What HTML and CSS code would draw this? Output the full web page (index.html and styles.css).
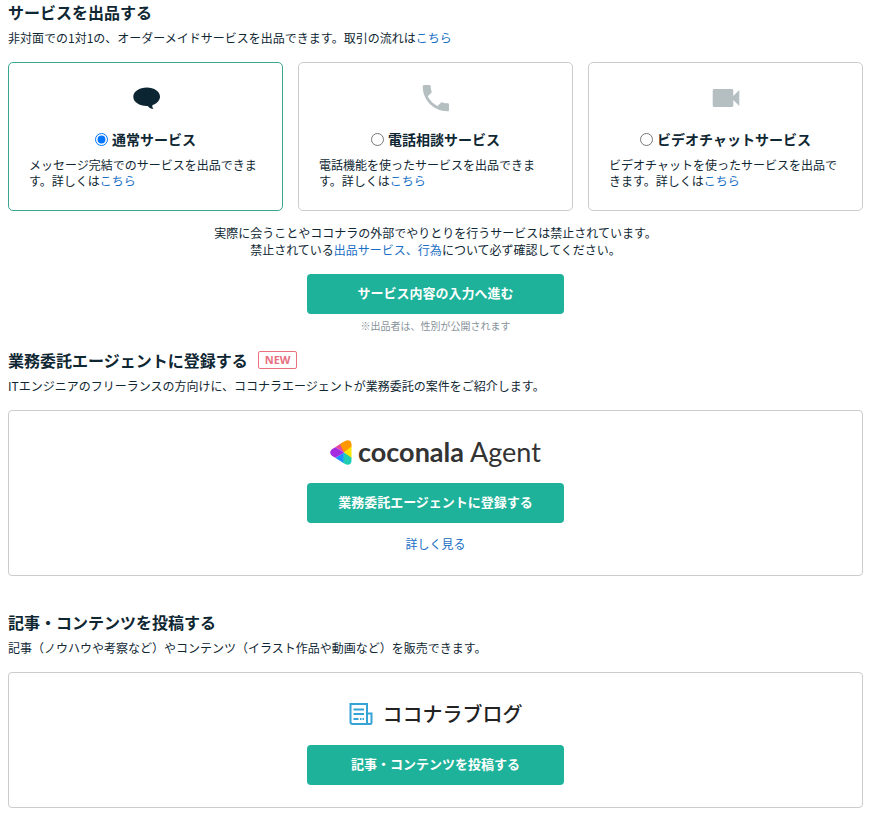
FILE: index.html
```
<!DOCTYPE html>
<html lang="ja">
<head>
  <meta charset="UTF-8">
  <meta name="viewport" content="width=device-width, initial-scale=1">
  <title>出品する</title>
  <link rel="stylesheet" href="styles.css">
</head>
<body>
  <section class="section">
    <h2 class="title">サービスを出品する</h2>
    <p class="lead">非対面での1対1の、オーダーメイドサービスを出品できます。取引の流れは<a href="#">こちら</a></p>
    <form action="#">
      <div class="cards">
        <div class="card active">
          <svg class="card-icon" viewBox="0 0 32 32">
            <path d="M16.800 5.500C9.400 5.500 3.300 9.500 3.300 14.700s6.100 9.300 13.500 9.300c.6 0 1 .1 1.400.5 1.200 1.400 2.800 2.400 5.300 2.600-1.200-1.300-1.400-2.800-1-4.100 4.400-1.500 7.500-4.700 7.500-8.300 0-5.200-5.800-9.200-13.200-9.200z" fill="#0b2532"/>
          </svg>
          <div class="card-title">
            <input type="radio" name="kind" id="kind-normal" checked>
            <label for="kind-normal">通常サービス</label>
          </div>
          <p class="card-text">メッセージ完結でのサービスを出品できます。詳しくは<a href="#">こちら</a></p>
        </div>
        <div class="card">
          <svg class="card-icon" viewBox="0 0 32 32">
            <path d="M7.700 14.200c2.100 4.200 5.600 7.700 9.900 9.900l3.300-3.300c.4-.4 1-.5 1.500-.4 1.700.6 3.500.9 5.300.9.800 0 1.300.6 1.300 1.400v5.200c0 .8-.6 1.400-1.400 1.400C13.600 29.300 2.700 18.300 2.700 4.300c0-.8.600-1.400 1.400-1.400h5.200c.8 0 1.400.6 1.400 1.400 0 1.800.3 3.600.9 5.300.2.500 0 1.100-.3 1.500z" fill="#b5bfc2"/>
          </svg>
          <div class="card-title">
            <input type="radio" name="kind" id="kind-phone">
            <label for="kind-phone">電話相談サービス</label>
          </div>
          <p class="card-text">電話機能を使ったサービスを出品できます。詳しくは<a href="#">こちら</a></p>
        </div>
        <div class="card">
          <svg class="card-icon" viewBox="0 0 32 32">
            <path d="M23.300 14V8.500c0-.8-.7-1.500-1.500-1.500H4.200c-.8 0-1.500.7-1.500 1.500v15c0 .8.700 1.500 1.500 1.500h17.600c.8 0 1.500-.7 1.500-1.500V18l6 6V8z" fill="#b5bfc2"/>
          </svg>
          <div class="card-title">
            <input type="radio" name="kind" id="kind-video">
            <label for="kind-video">ビデオチャットサービス</label>
          </div>
          <p class="card-text">ビデオチャットを使ったサービスを出品できます。詳しくは<a href="#">こちら</a></p>
        </div>
      </div>
      <p class="notice">実際に会うことやココナラの外部でやりとりを行うサービスは禁止されています。<br>禁止されている<a href="#">出品サービス、行為</a>について必ず確認してください。</p>
      <button type="submit" class="btn">サービス内容の入力へ進む</button>
      <p class="note">※出品者は、性別が公開されます</p>
    </form>
  </section>

  <section class="section agent">
    <h2 class="title">業務委託エージェントに登録する <span class="badge">NEW</span></h2>
    <p class="lead">ITエンジニアのフリーランスの方向けに、ココナラエージェントが業務委託の案件をご紹介します。</p>
    <div class="panel">
      <div class="logo">
        <svg class="agent-mark" viewBox="0 0 22 25">
          <defs>
            <clipPath id="mark">
              <path d="M15 1C18.500-1 21.500.9 21.500 4.200v16.600c0 3.300-3 5.200-6.500 3.200L2 15.800c-2.300-1.600-2.300-5 0-6.600z"/>
            </clipPath>
          </defs>
          <g clip-path="url(#mark)">
            <path d="M14 12.500L5 7V0h8z" fill="#e8489a"/>
            <path d="M14 12.500L10 4l3-4h9v7z" fill="#ff9800"/>
            <path d="M14 12.500L22 6v13z" fill="#ffe500"/>
            <path d="M14 12.500L22 18v7H12z" fill="#1fcdb4"/>
            <path d="M14 12.500L5 18v7h8z" fill="#1e90ff"/>
            <path d="M14 12.500L5 7 0 9v8l5 1z" fill="#a52be0"/>
          </g>
        </svg>
        <span class="agent-name"><b>coconala</b> Agent</span>
      </div>
      <button type="button" class="btn">業務委託エージェントに登録する</button>
      <a href="#" class="more">詳しく見る</a>
    </div>
  </section>

  <section class="section blog">
    <h2 class="title">記事・コンテンツを投稿する</h2>
    <p class="lead">記事（ノウハウや考察など）やコンテンツ（イラスト作品や動画など）を販売できます。</p>
    <div class="panel">
      <div class="logo">
        <svg class="blog-mark" viewBox="0 0 24 24" fill="none" stroke="#35a3d5" stroke-width="2">
          <path d="M18 22V2H1.500v18c0 1.200.8 2 2 2H21c1 0 1.500-.6 1.500-1.500V11.500H18"/>
          <path d="M4.500 7.500h10.500M4.500 12h10.500M4.500 17h5M11 17h1.500M13.500 17h1.500"/>
        </svg>
        <span class="blog-name">ココナラブログ</span>
      </div>
      <button type="button" class="btn">記事・コンテンツを投稿する</button>
    </div>
  </section>
</body>
</html>
```
FILE: styles.css
```
* {
  box-sizing: border-box;
}
body {
  margin: 0;
  padding: 0 9px 7px 8px;
  background: #fff;
  color: #0f2733;
  font-family: "Noto Sans CJK JP", sans-serif;
  font-size: 12px;
  line-height: 18px;
}
h2, p {
  margin: 0;
}
a {
  color: #1a6fc4;
  text-decoration: none;
}
.title {
  display: flex;
  align-items: center;
  gap: 10px;
  font-size: 16px;
  font-weight: bold;
  line-height: 24px;
}
.lead {
  margin: 5px 0 15px;
}
.agent {
  margin-top: 14px;
}
.blog {
  margin-top: 34px;
}
.cards {
  display: grid;
  grid-template-columns: repeat(3, 1fr);
  gap: 15px;
}
.card {
  padding: 19px 20px 21px;
  border: 1px solid #ccc;
  border-radius: 5px;
}
.card.active {
  border-color: #3aa692;
}
.card-icon {
  display: block;
  width: 32px;
  height: 32px;
  margin: 0 auto 15px;
}
.card-title {
  display: flex;
  justify-content: center;
  align-items: center;
  gap: 4px;
  font-size: 14px;
  font-weight: bold;
  line-height: 20px;
}
.card-title input {
  width: 13px;
  height: 13px;
  margin: 0;
}
.card-text {
  margin-top: 8px;
  line-height: 16px;
}
.notice {
  margin: 13px 0 16px;
  text-align: center;
  line-height: 17px;
}
.btn {
  display: block;
  width: 257px;
  max-width: 100%;
  height: 40px;
  margin: 0 auto;
  padding: 0 0 4px;
  border: 0;
  border-radius: 4px;
  background: #1db299;
  color: #fff;
  font-family: inherit;
  font-size: 13px;
  font-weight: bold;
  cursor: pointer;
}
.note {
  margin-top: 4px;
  color: #87929a;
  font-size: 10px;
  line-height: 16px;
  text-align: center;
}
.badge {
  height: 18px;
  padding: 0 6px;
  border: 1px solid #e8707f;
  border-radius: 2px;
  color: #e8707f;
  font-family: "Open Sans", sans-serif;
  font-size: 11px;
  line-height: 15px;
}
.panel {
  padding: 24px 20px 22px;
  border: 1px solid #ccc;
  border-radius: 4px;
  text-align: center;
}
.logo {
  display: flex;
  justify-content: center;
  align-items: center;
  height: 34px;
  margin-bottom: 14px;
}
.agent-mark {
  width: 22px;
  height: 25px;
  margin-right: 6px;
}
.agent-name {
  color: #333;
  font-family: Lato, sans-serif;
  font-size: 27px;
  line-height: 32px;
}
.blog-mark {
  width: 24px;
  height: 24px;
  margin-right: 10px;
}
.blog-name {
  color: #222;
  font-size: 20px;
  font-weight: 500;
  line-height: 32px;
}
.more {
  display: inline-block;
  margin-top: 12px;
}
```
